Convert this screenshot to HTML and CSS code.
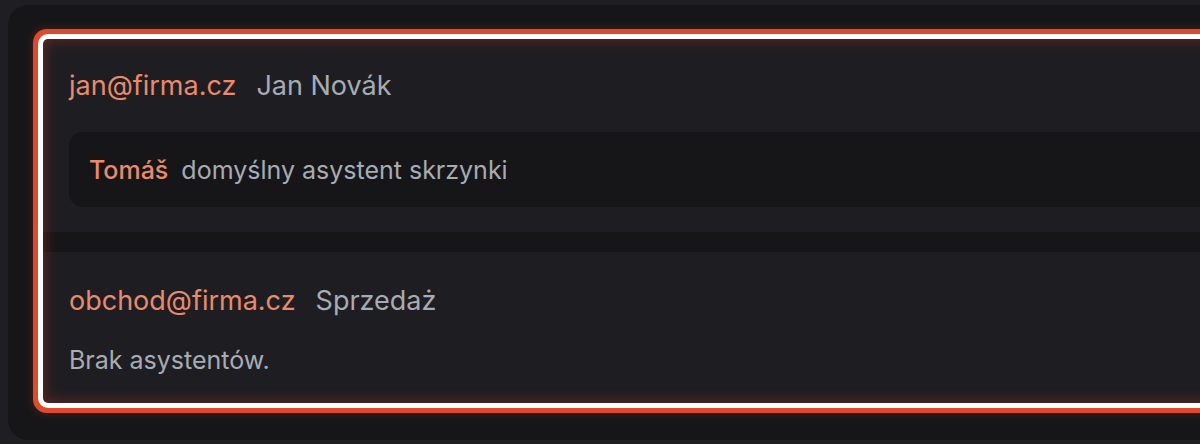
FILE: index.html
```html
<!DOCTYPE html>
<html lang="pl">
<head>
<meta charset="utf-8">
<title>Skrzynki</title>
<link rel="stylesheet" href="styles.css">
</head>
<body>
<div class="panel">
  <div class="group">
    <div class="card">
      <div class="head">
        <span class="email">jan@firma.cz</span>
        <span class="name">Jan Novák</span>
      </div>
      <div class="assistant">
        <span class="aname">Tomáš</span>
        <span class="adesc">domyślny asystent skrzynki</span>
      </div>
    </div>
    <div class="card card-empty">
      <div class="head">
        <span class="email">obchod@firma.cz</span>
        <span class="name">Sprzedaż</span>
      </div>
      <div class="empty">Brak asystentów.</div>
    </div>
  </div>
</div>
</body>
</html>
```

FILE: styles.css
```css
html, body {
  margin: 0;
  padding: 0;
}
body {
  background: #1f1f23;
  width: 1200px;
  height: 444px;
  overflow: hidden;
  font-family: Inter, "Noto Sans", sans-serif;
  -webkit-font-smoothing: antialiased;
}
.panel {
  margin: 5px 0 0 8px;
  width: 1400px;
  height: 435px;
  box-sizing: border-box;
  background: #161618;
  border-radius: 20px;
  padding: 35px 0 0 35px;
}
.group {
  position: relative;
  display: flex;
  flex-direction: column;
  gap: 20px;
  width: 1300px;
  border-radius: 4px;
  box-shadow: 0 0 0 1px #2a1a1a;
}
.group::after {
  content: "";
  position: absolute;
  inset: -1px 0 0 0;
  border-radius: 5px;
  pointer-events: none;
  box-shadow:
    0 0 0 5px #ffffff,
    0 0 0 10px #e04a2c,
    0 0 8px 11px rgba(224, 74, 44, 0.22),
    inset 0 0 12px 3px rgba(170, 55, 38, 0.38);
}
.card {
  background: #1e1e22;
  padding: 25px 26px;
}
.card-empty {
  padding: 28px 26px 25px;
}
.head {
  display: flex;
  align-items: center;
  gap: 20px;
  height: 40px;
  font-size: 27px;
}
.email {
  color: #ea8a6c;
  font-weight: 400;
}
.name {
  color: #a7acb4;
}
.assistant {
  margin-top: 27px;
  height: 75px;
  display: flex;
  align-items: center;
  gap: 13px;
  padding: 0 20px;
  background: #161618;
  border-radius: 14px;
  font-size: 25px;
}
.aname {
  color: #ea8a6c;
  font-weight: 500;
}
.adesc {
  color: #a7acb4;
}
.empty {
  margin-top: 22px;
  height: 36px;
  line-height: 36px;
  font-size: 25px;
  color: #a7acb4;
}
```
